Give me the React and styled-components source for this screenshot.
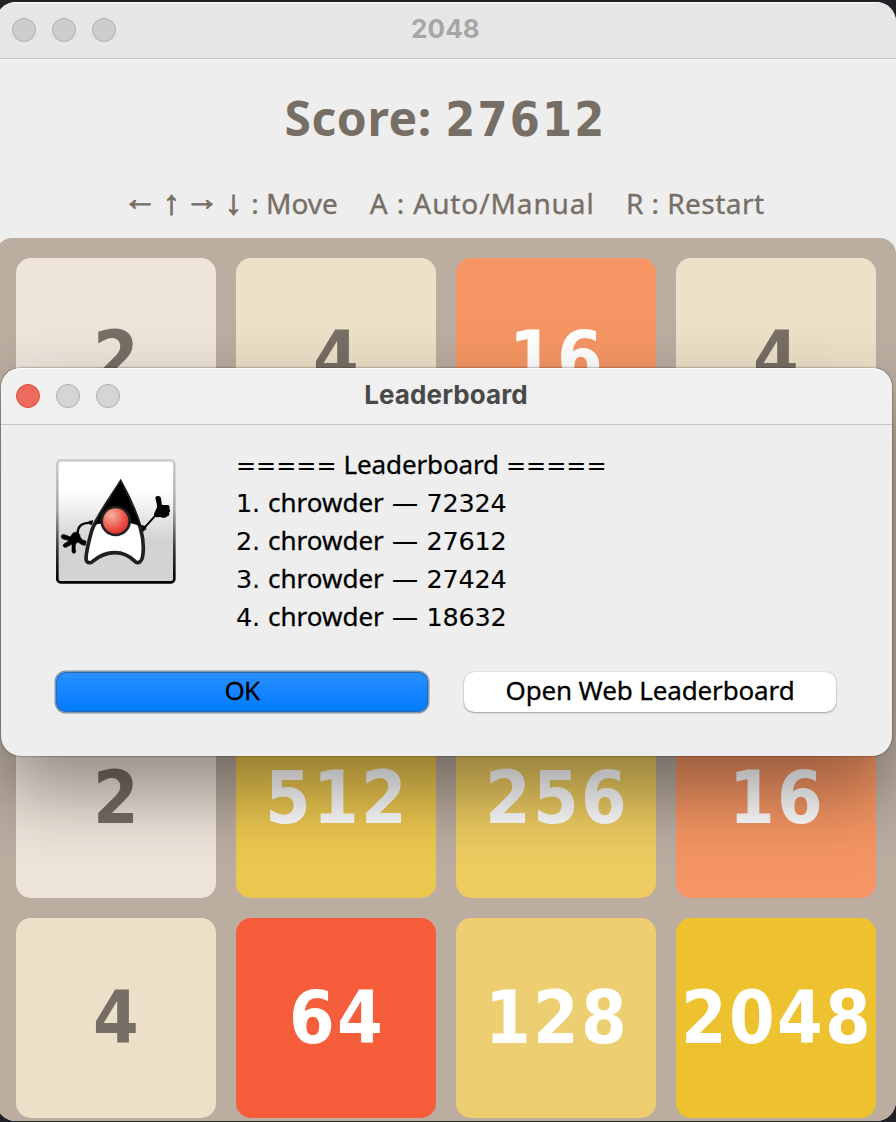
import React from 'react';
import styled, { createGlobalStyle, css } from 'styled-components';

const WORDS = '"Noto Sans", sans-serif';
const BOLD_DIGITS = '"DejaVu Sans Condensed", "DejaVu Sans", sans-serif';
const DIGITS = '"DejaVu Sans", sans-serif';

const GlobalStyle = createGlobalStyle`
  * { box-sizing: border-box; }
  html, body { margin: 0; padding: 0; background: #222126; overflow: hidden; }
`;

const Desktop = styled.div`
  position: relative;
  width: 896px;
  height: 1122px;
  padding-top: 2px;
  overflow: hidden;
  background: #222126;
`;

const GameWindow = styled.main`
  width: 900px;
  height: 1119px;
  margin-left: -4px;
  border-radius: 20px;
  overflow: hidden;
  background: #eeeeee;
  display: flex;
  flex-direction: column;
`;

const TitleBar = styled.header`
  display: flex;
  align-items: center;
  flex: none;
  height: 57px;
  padding: 0 ${p => p.$pad}px;
  border-bottom: 1px solid #c7c7c7;
  background: ${p => p.$bg};
  box-shadow: inset 0 2px 1px -1px #ffffff;
`;

const Lights = styled.div`
  display: flex;
  gap: 16px;
  width: 160px;
`;

const Light = styled.span`
  width: 24px;
  height: 24px;
  border-radius: 50%;
  border: 1px solid ${p => (p.$close ? '#d9503f' : '#b0b0b0')};
  background: ${p => (p.$close ? '#ee6b5e' : p.$dim ? '#cdcdcd' : '#d5d5d5')};
`;

const Title = styled.h1`
  flex: 1;
  margin: 0;
  padding: 0 161px 2px 0;
  text-align: center;
  font: 700 26px/32px Inter, sans-serif;
  letter-spacing: ${p => p.$spacing}px;
  color: ${p => p.$color};
`;

const Score = styled.div`
  display: flex;
  flex: none;
  justify-content: center;
  align-items: baseline;
  gap: 13.5px;
  height: 118px;
  padding: 26px 1px 0 0;
  color: #776e65;
  font: 700 48px/66px ${WORDS};
  letter-spacing: 0.6px;
`;

const ScoreValue = styled.span`
  font-family: ${BOLD_DIGITS};
  letter-spacing: 2.2px;
`;

const Hints = styled.div`
  display: flex;
  flex: none;
  align-items: baseline;
  height: 61px;
  padding: 6px 0 0 132px;
  color: #776e65;
  font: 28px/40px ${WORDS};
  -webkit-text-stroke: 0.35px #776e65;
  white-space: pre;
`;

const ArrowKey = styled.span`
  width: ${p => p.$width}px;
  margin-left: ${p => (p.$first ? -5 : 0)}px;
  font: 34px/28px "Liberation Sans", sans-serif;
  -webkit-text-stroke: 1px #776e65;
  ${p => p.$raised && css`transform: translateY(-4px);`}
`;

const Colon = styled.span`
  width: 22px;
`;

const Hint = styled.span`
  letter-spacing: ${p => p.$spacing}px;
  margin-right: ${p => p.$after}px;
`;

const Board = styled.section`
  flex: 1;
  display: grid;
  grid-template-columns: repeat(4, 200px);
  grid-auto-rows: 200px;
  gap: 20px;
  padding: 20px 20px 0;
  border-radius: 16px 16px 0 0;
  background: #bbada0;
`;

const tones = {
  2: '#eee4da',
  4: '#ede0c8',
  8: '#f2b179',
  16: '#f59563',
  64: '#f65e3b',
  128: '#edcf72',
  256: '#edcc61',
  512: '#edc850',
  2048: '#edc22e',
};

const Tile = styled.div`
  display: flex;
  justify-content: center;
  align-items: center;
  border-radius: 15px;
  padding-left: 2px;
  background: ${p => tones[p.$value]};
  color: ${p => (p.$value > 4 ? '#ffffff' : '#776e65')};
  font: 700 73px/84px ${BOLD_DIGITS};
  letter-spacing: 2.3px;
`;

const Dialog = styled.div`
  position: absolute;
  left: 1px;
  top: 368px;
  width: 891px;
  height: 388px;
  border-radius: 20px;
  background: #eeeeee;
  box-shadow: 0 0 2px rgba(0, 0, 0, 0.65), 0 36px 76px rgba(0, 0, 0, 0.4);
  display: flex;
  flex-direction: column;
`;

const DialogTop = styled(TitleBar)`
  border-radius: 20px 20px 0 0;
`;

const Message = styled.div`
  display: flex;
  gap: 60px;
  height: 246px;
  padding: 34px 0 0 55px;
`;

const Duke = styled.svg`
  flex: none;
  width: 120px;
  height: 125px;
`;

const Entries = styled.div`
  margin-top: -14px;
  color: #000;
  font: 26px/38px ${WORDS};
  -webkit-text-stroke: 0.3px #000;
  white-space: pre;
`;

const Line = styled.div`
  display: flex;
  align-items: baseline;
  height: 38px;
`;

const Rule = styled.span`
  font: 24px/38px "DejaVu Sans", sans-serif;
  -webkit-text-stroke: 0;
  width: ${p => (p.$last ? 101 : 107.5)}px;
`;

const Heading = styled.span`
  width: 162.5px;
  letter-spacing: -0.12px;
`;

const Digits = styled.span`
  font-family: ${DIGITS};
  font-size: 25.5px;
  -webkit-text-stroke: 0.1px #000;
  letter-spacing: -0.2px;
`;

const Rank = styled(Digits)`
  width: 32px;
`;

const Name = styled.span`
  width: 124px;
`;

const Dash = styled.span`
  width: 34.5px;
  -webkit-text-stroke: 0;
`;

const Actions = styled.div`
  display: flex;
  gap: 36px;
  padding: 1px 0 0 55px;
`;

const Button = styled.button`
  width: 372px;
  height: 40px;
  padding: 0 0 4px;
  border: 0;
  border-radius: 10px;
  color: #000;
  font: 26px/36px ${WORDS};
  -webkit-text-stroke: 0.3px #000;
  letter-spacing: ${p => (p.$primary ? -0.8 : -0.13)}px;
  ${p =>
    p.$primary
      ? css`
          background: linear-gradient(#2a90ff, #007aff);
          box-shadow: inset 0 0 0 1px #2a69ae, 0 0 0 1.5px #8299ae;
        `
      : css`
          background: #ffffff;
          box-shadow: 0 0 1px rgba(0, 0, 0, 0.35), 0 1px 2px rgba(0, 0, 0, 0.3);
        `}
`;

const cells = [2, 4, 16, 4, 8, 16, 4, 2, 2, 512, 256, 16, 4, 64, 128, 2048];
const scores = [72324, 27612, 27424, 18632];

function DukeIcon() {
  return (
    <Duke viewBox="48 42 360 375">
      <defs>
        <linearGradient id="plate" x1="0" y1="0" x2="0" y2="1">
          <stop offset="0.25" stopColor="#ffffff" />
          <stop offset="0.66" stopColor="#d2d2d2" />
          <stop offset="1" stopColor="#d4d4d4" />
        </linearGradient>
        <linearGradient id="frame" x1="0" y1="0" x2="0" y2="1">
          <stop offset="0" stopColor="#cfcfcf" />
          <stop offset="0.4" stopColor="#a8a8a8" />
          <stop offset="0.75" stopColor="#303030" />
          <stop offset="1" stopColor="#000000" />
        </linearGradient>
        <radialGradient id="nose" cx="0.35" cy="0.3" r="0.75">
          <stop offset="0" stopColor="#f8b39c" />
          <stop offset="0.65" stopColor="#ea5048" />
          <stop offset="1" stopColor="#d92b2b" />
        </radialGradient>
      </defs>
      <rect x="52" y="46" width="351" height="366" rx="10" fill="url(#plate)" stroke="url(#frame)" strokeWidth="8" />
      <path d="M156 233 C128 233 112 240 113 268" fill="none" stroke="#000" strokeWidth="7" />
      <path d="M146 228 L160 226 L156 240 L147 238 Z" />
      <path d="M104 262 C112 260 120 266 120 274 C122 284 132 287 138 288 L136 301 C126 301 121 296 115 292 C106 292 104 302 107 320 C106 326 98 326 96 320 L96 297 C88 301 84 305 77 307 C69 307 67 300 73 296 L88 287 C78 284 70 283 66 280 C61 274 66 267 73 269 L91 276 C96 268 98 264 104 262 Z" stroke="#000" strokeWidth="2" />
      <path d="M308 254 L346 212" fill="none" stroke="#000" strokeWidth="6" />
      <path d="M302 239 L318 244 L319 252 L307 262 Z" />
      <path d="M346 157 C351 151 363 152 363 161 C365 169 364 177 367 180 L383 180 C389 181 390 189 388 191 C392 196 391 200 387 203 C390 208 387 213 383 213 C379 220 366 219 361 216 L349 217 C344 215 341 210 342 206 L351 187 C352 177 347 169 346 157 Z" />
      <path
        d="M242 112 C218 150 176 207 156 254 C147 286 139 317 138 340 C138 354 149 356 157 350 C177 333 200 323 225 323 C249 323 269 333 286 350 C296 357 306 349 308 334 C313 302 309 278 302 252 C288 204 260 144 242 112 Z"
        fill="#ffffff"
        stroke="#202020"
        strokeWidth="11"
        strokeLinejoin="miter"
      />
      <path d="M242 110 C215 155 178 211 164 239 L190 234 L270 234 L300 242 C286 198 257 143 242 110 Z" />
      <circle cx="227" cy="228" r="42" fill="url(#nose)" stroke="#202020" strokeWidth="8" />
    </Duke>
  );
}

export default function App() {
  return (
    <Desktop>
      <GlobalStyle />
      <GameWindow>
        <TitleBar $pad={16} $bg="#e6e6e6">
          <Lights>
            <Light $dim />
            <Light $dim />
            <Light $dim />
          </Lights>
          <Title $color="#a6a6a6" $spacing={0.1}>2048</Title>
        </TitleBar>
        <Score>
          <span>Score:</span>
          <ScoreValue>27612</ScoreValue>
        </Score>
        <Hints>
          <ArrowKey $width={40} $first $raised>←</ArrowKey>
          <ArrowKey $width={22}>↑</ArrowKey>
          <ArrowKey $width={40} $raised>→</ArrowKey>
          <ArrowKey $width={19}>↓</ArrowKey>
          <Colon> :</Colon>
          <Hint $spacing={0} $after={32}>Move</Hint>
          <Hint $spacing={0.9} $after={31.4}>A : Auto/Manual</Hint>
          <Hint $spacing={0.45} $after={0}>R : Restart</Hint>
        </Hints>
        <Board>
          {cells.map((value, i) => (
            <Tile key={i} $value={value}>{i > 3 && i < 8 ? null : value}</Tile>
          ))}
        </Board>
      </GameWindow>
      <Dialog role="dialog">
        <DialogTop $pad={15} $bg="#f0f0f0">
          <Lights>
            <Light $close />
            <Light />
            <Light />
          </Lights>
          <Title $color="#484a4a" $spacing={0.1}>Leaderboard</Title>
        </DialogTop>
        <Message>
          <DukeIcon />
          <Entries>
            <Line>
              <Rule>=====</Rule>
              <Heading>Leaderboard</Heading>
              <Rule $last>=====</Rule>
            </Line>
            {scores.map((score, i) => (
              <Line key={score}>
                <Rank>{i + 1}.</Rank>
                <Name>chrowder</Name>
                <Dash>—</Dash>
                <Digits>{score}</Digits>
              </Line>
            ))}
          </Entries>
        </Message>
        <Actions>
          <Button $primary>OK</Button>
          <Button>Open Web Leaderboard</Button>
        </Actions>
      </Dialog>
    </Desktop>
  );
}
